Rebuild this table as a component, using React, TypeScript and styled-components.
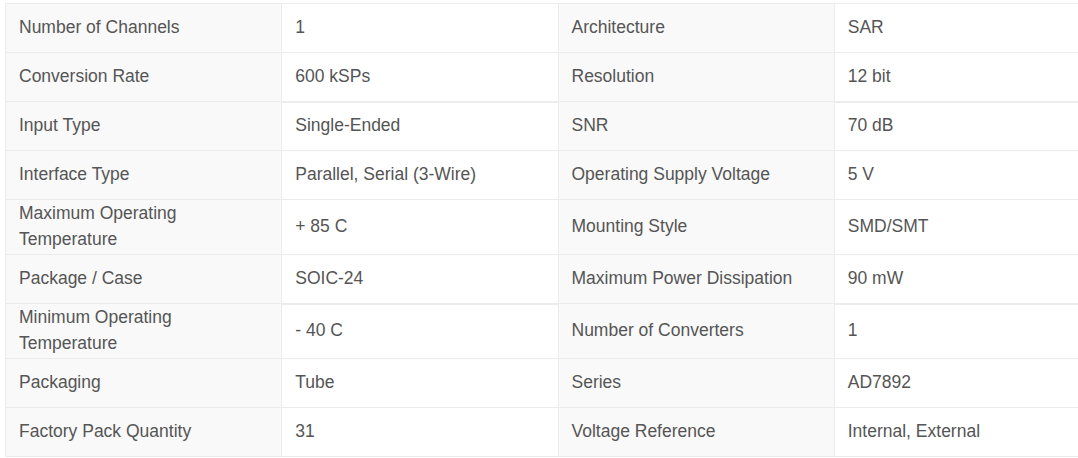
import React from "react";
import styled, { createGlobalStyle } from "styled-components";

const Global = createGlobalStyle`
  html, body { margin: 0; padding: 0; background: #ffffff; }
  body { font-family: "Liberation Sans", Arial, sans-serif; }
`;

const Wrap = styled.div`
  padding: 3px 0 0 5px;
  width: 1078px;
  overflow: hidden;
  box-sizing: border-box;
`;

const Table = styled.table`
  border-collapse: collapse;
  table-layout: fixed;
  width: 1106px;
  font-size: 17.5px;
  color: #555555;
`;

const Cell = styled.td<{ $label?: boolean; $thick?: boolean }>`
  width: 25%;
  height: 49px;
  box-sizing: border-box;
  padding: 0 13px 2px;
  line-height: 26px;
  vertical-align: middle;
  border: 1px solid #ececec;
  background: ${(p) => (p.$label ? "#f9f9f9" : "#ffffff")};
  ${(p) => (p.$thick && !p.$label ? "box-shadow: inset 0 1px 0 #ececec;" : "")}
`;

type Row = [string, string, string, string, boolean?];

const rows: Row[] = [
  ["Number of Channels", "1", "Architecture", "SAR"],
  ["Conversion Rate", "600 kSPs", "Resolution", "12 bit"],
  ["Input Type", "Single-Ended", "SNR", "70 dB", true],
  ["Interface Type", "Parallel, Serial (3-Wire)", "Operating Supply Voltage", "5 V"],
  ["Maximum Operating Temperature", "+ 85 C", "Mounting Style", "SMD/SMT"],
  ["Package / Case", "SOIC-24", "Maximum Power Dissipation", "90 mW"],
  ["Minimum Operating Temperature", "- 40 C", "Number of Converters", "1", true],
  ["Packaging", "Tube", "Series", "AD7892"],
  ["Factory Pack Quantity", "31", "Voltage Reference", "Internal, External"],
];

export default function App() {
  return (
    <>
      <Global />
      <Wrap>
        <Table>
          <tbody>
            {rows.map((r, i) => (
              <tr key={i}>
                <Cell $label>{r[0]}</Cell>
                <Cell $thick={r[4]}>{r[1]}</Cell>
                <Cell $label>{r[2]}</Cell>
                <Cell $thick={r[4]}>{r[3]}</Cell>
              </tr>
            ))}
          </tbody>
        </Table>
      </Wrap>
    </>
  );
}
